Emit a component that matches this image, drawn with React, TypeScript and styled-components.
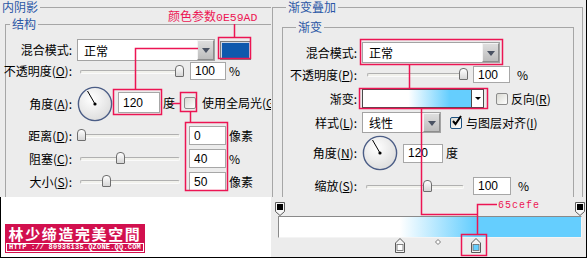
import React from 'react';
import styled, { createGlobalStyle } from 'styled-components';

const RED = '#ec1553';
const PANEL = '#ececec';
const CJK = '"Noto Sans CJK SC", "Liberation Sans", sans-serif';

const GlobalStyle = createGlobalStyle`
  html, body {
    margin: 0;
    padding: 0;
    background: #fff;
  }
  body {
    font-family: ${CJK};
    font-size: 12px;
    color: #000;
  }
`;

const Frame = styled.div`
  position: relative;
  width: 586px;
  height: 257px;
  display: flex;
  border-right: 1px solid #000;
  border-bottom: 1px solid #000;
  overflow: hidden;
`;

const LeftColumn = styled.div`
  width: 271px;
  display: flex;
  flex-direction: column;
`;

const Panel = styled.div<{ $h: number; $pt?: number }>`
  height: ${(p) => p.$h}px;
  padding-top: ${(p) => p.$pt ?? 0}px;
  box-sizing: border-box;
  background: ${PANEL};
  overflow: hidden;
`;

const Blank = styled.div`
  flex: 1;
  background: #fff;
  border-left: 1px solid #000;
  display: flex;
  align-items: flex-end;
  padding: 0 0 4px 4px;
`;

const RightColumn = styled.div`
  width: 315px;
  background: ${PANEL};
  display: flex;
  flex-direction: column;
`;

const Group = styled.fieldset<{ $ml?: number; $mr?: number; $mt?: number; $noLeft?: boolean; $w?: number }>`
  margin: ${(p) => `${p.$mt ?? 0}px ${p.$mr ?? 0}px 0 ${p.$ml ?? 0}px`};
  padding: 0 0 40px;
  min-width: 0;
  ${(p) => (p.$w ? `width: ${p.$w}px;` : '')}
  box-sizing: border-box;
  border: 1px solid #a6a6a6;
  ${(p) => (p.$noLeft ? 'border-left: none;' : '')}
`;

const Caption = styled.legend<{ $offset: number }>`
  margin-left: ${(p) => p.$offset}px;
  padding: 0 2px;
  font-size: 12px;
  line-height: 12px;
  height: 12px;
  color: #2b57a6;
  background: ${PANEL};
  white-space: nowrap;
`;

const Rows = styled.div<{ $pt: number }>`
  padding-top: ${(p) => p.$pt}px;
  display: flex;
  flex-direction: column;
`;

const Row = styled.div<{ $h: number; $mt?: number }>`
  display: flex;
  align-items: center;
  height: ${(p) => p.$h}px;
  margin-top: ${(p) => p.$mt ?? 0}px;
  white-space: nowrap;
`;

const Label = styled.div<{ $w: number }>`
  flex: none;
  width: ${(p) => p.$w}px;
  margin-right: 5px;
  display: flex;
  justify-content: flex-end;
  line-height: 14px;
`;

const Cluster = styled.div<{ $mt: number; $h: number }>`
  align-self: flex-start;
  margin-top: ${(p) => p.$mt}px;
  height: ${(p) => p.$h}px;
  display: flex;
  align-items: center;
`;

const Select = styled.div<{ $w: number; $h: number }>`
  flex: none;
  display: flex;
  width: ${(p) => p.$w}px;
  height: ${(p) => p.$h}px;
  box-sizing: border-box;
  border: 1px solid #a3a3a3;
  background: #fff;
`;

const SelectText = styled.span`
  flex: 1;
  padding-left: 6px;
  display: flex;
  align-items: center;
  font-size: 12px;
`;

const DropButton = styled.span`
  width: 17px;
  box-sizing: border-box;
  border: 1px solid;
  border-color: #f4f4f4 #8d8d8d #8d8d8d #f4f4f4;
  background: linear-gradient(#dedede, #bdbdbd);
  display: flex;
  align-items: center;
  justify-content: center;

  &::after {
    content: '';
    border-left: 4px solid transparent;
    border-right: 4px solid transparent;
    border-top: 5px solid #4a5262;
    margin-top: 1px;
  }
`;

const Swatch = styled.div<{ $color: string }>`
  flex: none;
  margin-left: 5px;
  width: 31px;
  height: 19px;
  box-sizing: border-box;
  border: 1px solid #7c7c7c;
  background: ${(p) => p.$color};
  box-shadow: inset 0 0 0 1px #c9d4e4;
`;

const Field = styled.div<{ $w: number; $h: number; $ml?: number }>`
  flex: none;
  width: ${(p) => p.$w}px;
  height: ${(p) => p.$h}px;
  margin-left: ${(p) => p.$ml ?? 0}px;
  box-sizing: border-box;
  border: 1px solid #a7a7a7;
  background: #fff;
  padding-left: 4px;
  display: flex;
  align-items: center;
  font: 12px "Liberation Sans", sans-serif;
`;

const Unit = styled.span<{ $ml: number }>`
  margin-left: ${(p) => p.$ml}px;
  line-height: 14px;
`;

const SliderBox = styled.div<{ $w: number }>`
  position: relative;
  flex: none;
  width: ${(p) => p.$w}px;
  height: 13px;
`;

const Track = styled.div<{ $left: number; $w: number }>`
  position: absolute;
  left: ${(p) => p.$left}px;
  width: ${(p) => p.$w}px;
  top: 5px;
  height: 4px;
  box-sizing: border-box;
  border: 1px solid;
  border-color: #b0b0b0 #fafafa #fafafa #b0b0b0;
  background: #f1f1ec;
  border-radius: 2px;
`;

const Thumb = styled.div`
  position: absolute;
  top: 0;
  width: 9px;
  height: 12px;
  margin-left: -4px;
  box-sizing: border-box;
  border: 1px solid #6e6e6e;
  border-radius: 4px 4px 1px 1px;
  background: linear-gradient(#ffffff, #d6d6d6);
`;

const Check = styled.span<{ $on?: boolean; $ml: number }>`
  flex: none;
  position: relative;
  margin-left: ${(p) => p.$ml}px;
  width: 12px;
  height: 12px;
  box-sizing: border-box;
  border: 1px solid ${(p) => (p.$on ? '#1c5180' : '#8c8c8c')};
  border-radius: 2px;
  background: linear-gradient(135deg, #d9d9d2, #ffffff);
`;

const CheckText = styled.span<{ $ml: number }>`
  margin-left: ${(p) => p.$ml}px;
  line-height: 14px;
`;

const GradientPick = styled.div`
  flex: none;
  display: flex;
  width: 122px;
  height: 19px;
  box-sizing: border-box;
  border: 1px solid #4a4a4a;
`;

const GradientFill = styled.div`
  flex: 1;
  background: linear-gradient(to right, #ffffff 42%, #65cefe 80%);
`;

const GradientArrow = styled.div`
  width: 11px;
  border-left: 1px solid #4a4a4a;
  background: #fff;
  display: flex;
  align-items: center;
  justify-content: center;

  &::after {
    content: '';
    border-left: 3px solid transparent;
    border-right: 3px solid transparent;
    border-top: 3px solid #000;
  }
`;

const Editor = styled.div`
  flex: 1;
  padding: 5px 4px 0 7px;
  display: flex;
  flex-direction: column;
`;

const StopLane = styled.div<{ $h: number }>`
  position: relative;
  height: ${(p) => p.$h}px;
`;

const StopMark = styled.svg`
  position: absolute;
  top: 0;
  margin-left: -5px;
  overflow: visible;
`;

const Ramp = styled.div`
  height: 22px;
  box-sizing: border-box;
  border: 1px solid;
  border-color: #8a8a8a #f4f4f4 #f4f4f4 #8a8a8a;
  background: linear-gradient(to right, #ffffff 40%, #65cefe 65%);
`;

const Logo = styled.div`
  width: 138px;
  padding: 2px 1px 1px;
  background: #d2104e;
  display: flex;
  flex-direction: column;
  align-items: center;
`;

const LogoTitle = styled.div`
  color: #fff;
  font: bold 15px/16px ${CJK};
  letter-spacing: 1.6px;
  white-space: nowrap;
`;

const LogoUrl = styled.div`
  align-self: stretch;
  margin-top: 1px;
  border: 1px solid #fff;
  color: #fff;
  font: bold 7px/7px "Liberation Mono", monospace;
  letter-spacing: 0.2px;
  text-align: center;
  white-space: nowrap;
`;

const Notes = styled.svg`
  position: absolute;
  left: 0;
  top: 0;
  pointer-events: none;
`;

const NoteText = styled.span<{ $x: number; $y: number }>`
  position: absolute;
  left: ${(p) => p.$x}px;
  top: ${(p) => p.$y}px;
  color: ${RED};
  line-height: 14px;
  white-space: nowrap;
`;

const Code = styled.span<{ $size: number; $spacing: number }>`
  font-family: "Liberation Mono", monospace;
  font-size: ${(p) => p.$size}px;
  letter-spacing: ${(p) => p.$spacing}px;
`;

const Slider = ({ w, left, span, start, range, pct }: { w: number; left: number; span: number; start: number; range: number; pct: number }) => (
  <SliderBox $w={w}>
    <Track $left={left} $w={span} />
    <Thumb style={{ left: start + (range * pct) / 100 }} />
  </SliderBox>
);

const Dial = ({ angle }: { angle: number }) => {
  const r = (angle * Math.PI) / 180;
  const x = 18 + Math.cos(r) * 15;
  const y = 18 - Math.sin(r) * 15;
  return (
    <svg width="36" height="36" viewBox="0 0 36 36" style={{ flex: 'none' }}>
      <defs>
        <radialGradient id={`dial${angle}`} cx="0.4" cy="0.35" r="0.7">
          <stop offset="0" stopColor="#ffffff" />
          <stop offset="1" stopColor="#dcdcdc" />
        </radialGradient>
      </defs>
      <circle cx="18" cy="18" r="16.6" fill={`url(#dial${angle})`} stroke="#4b5d86" strokeWidth="1.4" />
      <line x1="18" y1="18" x2={x} y2={y} stroke="#000" strokeWidth="1" />
      <circle cx="18" cy="18" r="1.6" fill="#000" />
    </svg>
  );
};

const Tick = () => (
  <svg width="12" height="12" viewBox="0 0 12 12" style={{ position: 'absolute', left: 0, top: -3 }}>
    <path d="M2 6 L4.5 9 L10 1" fill="none" stroke="#000" strokeWidth="2" />
  </svg>
);

const Acc = ({ children }: { children: string }) => <u>{children}</u>;

const OpacityStop = ({ at }: { at: number }) => (
  <StopMark width="10" height="14" style={{ left: at }}>
    <path d="M0.5 0.5 H9.5 V9.5 L5 13.5 L0.5 9.5 Z" fill="#f6f6f6" stroke="#5a5a5a" />
    <rect x="2" y="2" width="6" height="6" fill="#000" />
  </StopMark>
);

const ColorStop = ({ at, color }: { at: number; color: string }) => (
  <StopMark width="10" height="15" style={{ left: at }}>
    <path d="M5 0.5 L9.5 5 V14.5 H0.5 V5 Z" fill="#f4f4f4" stroke="#5a5a5a" />
    <rect x="2" y="6.5" width="6" height="6" fill={color} stroke="#6a6a6a" strokeWidth="0.8" />
  </StopMark>
);

const Midpoint = ({ at }: { at: number }) => (
  <StopMark width="6" height="6" style={{ left: at, top: 1, marginLeft: -3 }}>
    <path d="M3 0.5 L5.5 3 L3 5.5 L0.5 3 Z" fill="#fff" stroke="#7a7a7a" />
  </StopMark>
);

const App = () => (
  <>
    <GlobalStyle />
    <Frame>
      <LeftColumn>
        <Panel $h={197} $pt={1}>
          <Group $noLeft $w={300}>
            <Caption $offset={0}>内阴影</Caption>
            <Group $ml={5} $mt={5}>
              <Caption $offset={4}>结构</Caption>
              <Rows $pt={9}>
                <Row $h={22}>
                  <Label $w={66}>混合模式:</Label>
                  <Select $w={138} $h={22}>
                    <SelectText>正常</SelectText>
                    <DropButton />
                  </Select>
                  <Swatch $color="#0e59ad" />
                </Row>
                <Row $h={18} $mt={1}>
                  <Label $w={66}>
                    <span>
                      不透明度(<Acc>O</Acc>):
                    </span>
                  </Label>
                  <Slider w={112} left={3} span={100} start={4} range={98} pct={100} />
                  <Field $w={36} $h={18} $ml={1}>100</Field>
                  <Unit $ml={3}>%</Unit>
                </Row>
                <Row $h={36} $mt={6}>
                  <Label $w={66}>
                    <span>
                      角度(<Acc>A</Acc>):
                    </span>
                  </Label>
                  <Dial angle={120} />
                  <Cluster $mt={6} $h={21}>
                    <Field $w={42} $h={21} $ml={5}>120</Field>
                    <Unit $ml={3}>度</Unit>
                    <Check $ml={9} />
                    <CheckText $ml={6}>
                      使用全局光(<Acc>G</Acc>)
                    </CheckText>
                  </Cluster>
                </Row>
                <Row $h={19} $mt={4}>
                  <Label $w={66}>
                    <span>
                      距离(<Acc>D</Acc>):
                    </span>
                  </Label>
                  <Slider w={112} left={3} span={100} start={4} range={98} pct={0} />
                  <Field $w={37} $h={19}>0</Field>
                  <Unit $ml={3}>像素</Unit>
                </Row>
                <Row $h={19} $mt={4}>
                  <Label $w={66}>
                    <span>
                      阻塞(<Acc>C</Acc>):
                    </span>
                  </Label>
                  <Slider w={112} left={3} span={100} start={4} range={98} pct={40} />
                  <Field $w={37} $h={19}>40</Field>
                  <Unit $ml={3}>%</Unit>
                </Row>
                <Row $h={19} $mt={4}>
                  <Label $w={66}>
                    <span>
                      大小(<Acc>S</Acc>):
                    </span>
                  </Label>
                  <Slider w={112} left={3} span={100} start={4} range={98} pct={25.5} />
                  <Field $w={37} $h={19}>50</Field>
                  <Unit $ml={3}>像素</Unit>
                </Row>
              </Rows>
            </Group>
          </Group>
        </Panel>
        <Blank>
          <Logo>
            <LogoTitle>林少缔造完美空間</LogoTitle>
            <LogoUrl>HTTP :// 80936135.QZONE.QQ.COM</LogoUrl>
          </Logo>
        </Blank>
      </LeftColumn>

      <RightColumn>
        <Panel $h={197} $pt={1}>
          <Group $ml={1} $mr={3}>
            <Caption $offset={13}>渐变叠加</Caption>
            <Group $ml={9} $mr={8} $mt={8}>
              <Caption $offset={13}>渐变</Caption>
              <Rows $pt={9}>
                <Row $h={21}>
                  <Label $w={74}>混合模式:</Label>
                  <Select $w={138} $h={21}>
                    <SelectText>正常</SelectText>
                    <DropButton />
                  </Select>
                </Row>
                <Row $h={17} $mt={3}>
                  <Label $w={74}>
                    <span>
                      不透明度(<Acc>P</Acc>):
                    </span>
                  </Label>
                  <Slider w={111} left={5} span={95} start={6} range={95} pct={100} />
                  <Field $w={37} $h={17}>100</Field>
                  <Unit $ml={7}>%</Unit>
                </Row>
                <Row $h={21} $mt={5}>
                  <Label $w={74}>渐变:</Label>
                  <GradientPick>
                    <GradientFill />
                    <GradientArrow />
                  </GradientPick>
                  <Check $ml={12} />
                  <CheckText $ml={3}>
                    反向(<Acc>R</Acc>)
                  </CheckText>
                </Row>
                <Row $h={21} $mt={3}>
                  <Label $w={74}>
                    <span>
                      样式(<Acc>L</Acc>):
                    </span>
                  </Label>
                  <Select $w={79} $h={21}>
                    <SelectText>线性</SelectText>
                    <DropButton />
                  </Select>
                  <Check $on $ml={9}>
                    <Tick />
                  </Check>
                  <CheckText $ml={4}>
                    与图层对齐(<Acc>I</Acc>)
                  </CheckText>
                </Row>
                <Row $h={36} $mt={2}>
                  <Label $w={74}>
                    <span>
                      角度(<Acc>N</Acc>):
                    </span>
                  </Label>
                  <Dial angle={120} />
                  <Field $w={40} $h={19} $ml={5}>120</Field>
                  <Unit $ml={3}>度</Unit>
                </Row>
                <Row $h={18} $mt={6}>
                  <Label $w={74}>
                    <span>
                      缩放(<Acc>S</Acc>):
                    </span>
                  </Label>
                  <Slider w={111} left={4} span={98} start={6} range={95} pct={62} />
                  <Field $w={38} $h={18}>100</Field>
                  <Unit $ml={7}>%</Unit>
                </Row>
              </Rows>
            </Group>
          </Group>
        </Panel>
        <Editor>
          <StopLane $h={14}>
            <OpacityStop at={2} />
            <OpacityStop at={302} />
          </StopLane>
          <Ramp />
          <StopLane $h={15}>
            <ColorStop at={121.5} color="#ffffff" />
            <Midpoint at={160} />
            <ColorStop at={197.5} color="#65cefe" />
          </StopLane>
        </Editor>
      </RightColumn>

      {/* red callouts drawn over the dialogs */}
      <Notes width="587" height="258" viewBox="0 0 587 258" fill="none" stroke={RED} strokeWidth="1.5">
        <rect x="218.5" y="37.5" width="32" height="21" />
        <path d="M234.5 24 V37.5" />
        <rect x="113.5" y="89.5" width="48" height="25" />
        <path d="M135.5 89.5 V48.5 H198" />
        <path d="M172 103.5 H180.5" />
        <rect x="180.5" y="92.5" width="16" height="19" />
        <path d="M190.5 111.5 V122.5" />
        <rect x="185.5" y="122.5" width="42" height="68" />
        <rect x="360.5" y="39.5" width="142" height="25" />
        <path d="M409.5 64.5 V88.5" />
        <rect x="359.5" y="88.5" width="128" height="20" />
        <path d="M421.5 108.5 V214.5 H477.5" />
        <path d="M477.5 234.5 V204.5 H497" />
        <rect x="461.5" y="234.5" width="25" height="21" />
      </Notes>
      <NoteText $x={168} $y={9}>
        颜色参数<Code $size={11.5} $spacing={0}>0E59AD</Code>
      </NoteText>
      <NoteText $x={498} $y={196}>
        <Code $size={10} $spacing={1}>65cefe</Code>
      </NoteText>
    </Frame>
  </>
);

export default App;
